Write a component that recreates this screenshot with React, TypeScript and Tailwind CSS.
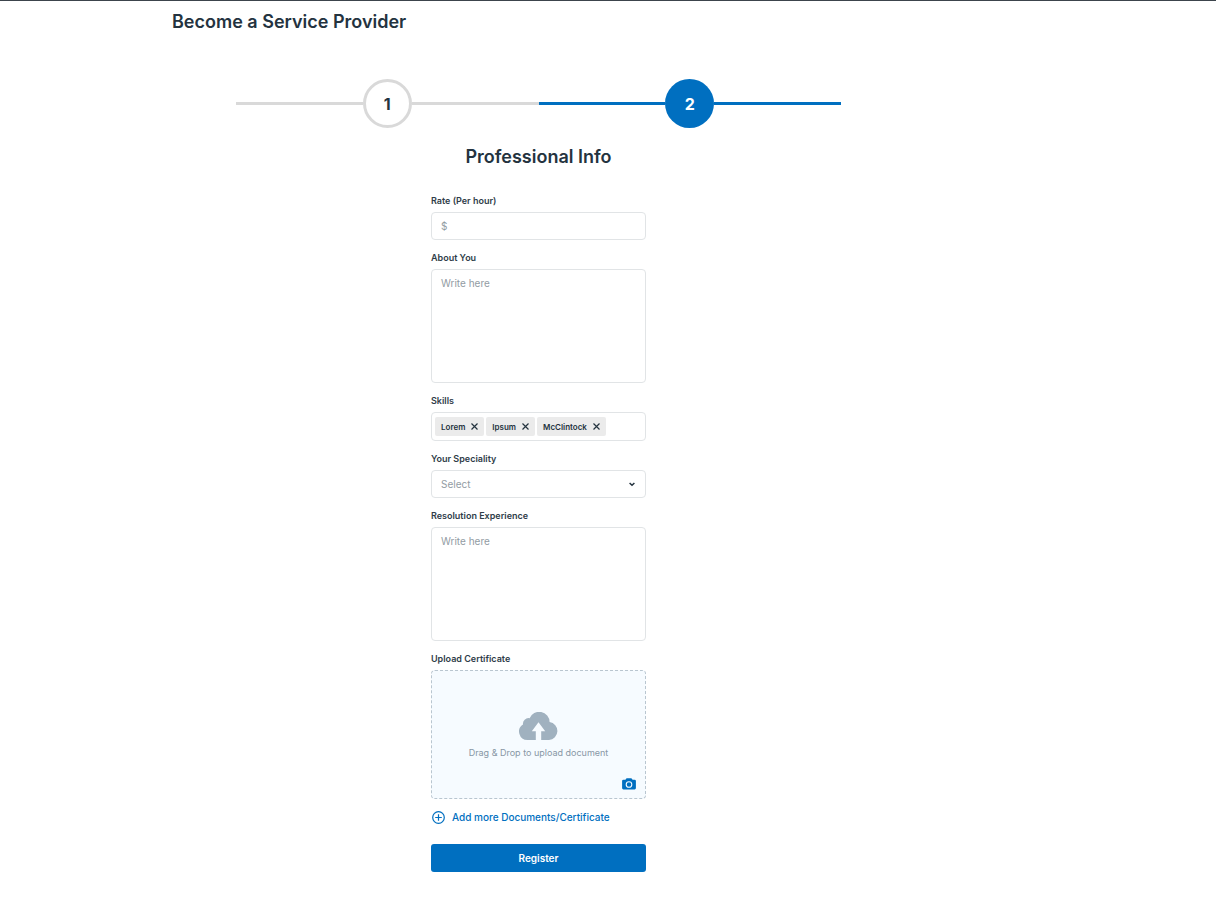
import { useState } from "react";
import type { ReactNode } from "react";

const boxClass =
  "block w-full rounded-[4px] border border-[#e1e4e6] bg-white text-[#24333f] outline-none focus:border-[#006fc0] placeholder:text-[#929ca3] placeholder:opacity-100";

function Field({ id, label, children }: { id: string; label: string; children: ReactNode }) {
  return (
    <div className="flex flex-col gap-1">
      <label htmlFor={id} className="text-[9px] leading-[14px] font-semibold text-[#2f3d49]">
        {label}
      </label>
      {children}
    </div>
  );
}

function Step({ number, active = false }: { number: number; active?: boolean }) {
  const line = active ? "h-[3px] flex-1 bg-[#006fc0]" : "h-[3px] flex-1 bg-[#d9d9d9]";
  const circle = active
    ? "flex size-[49px] items-center justify-center rounded-full bg-[#006fc0] text-base font-bold text-white"
    : "flex size-[49px] items-center justify-center rounded-full border-3 border-[#d9d9d9] bg-white text-base font-bold text-[#24333f]";
  return (
    <li className="flex flex-1 items-center" aria-current={active ? "step" : undefined}>
      <span className={line} />
      <span className={circle}>{number}</span>
      <span className={line} />
    </li>
  );
}

function CloudUpload() {
  return (
    <svg width="39" height="28" viewBox="0 0 39 28" aria-hidden="true">
      <path
        fill="#a0b1bf"
        d="M8.5 28A8.4 8.4 0 0 1 4 12.5A5.6 5.6 0 0 1 10.6 6.2A10.4 10.4 0 0 1 30.6 10.1A9 9 0 0 1 30 28Z"
      />
      <path fill="#f6fbff" d="M19.5 10.2L26.2 19.3H22.2V28H16.8V19.3H12.8Z" />
    </svg>
  );
}

function Camera() {
  return (
    <svg width="14" height="12" viewBox="0 0 14 12" aria-hidden="true">
      <path
        fill="#006fc0"
        d="M4.6 .3H9.4L10.6 1.7H12.6A1.3 1.3 0 0 1 13.9 3V10.1A1.3 1.3 0 0 1 12.6 11.4H1.4A1.3 1.3 0 0 1 .1 10.1V3A1.3 1.3 0 0 1 1.4 1.7H3.4Z"
      />
      <circle cx="7" cy="6.5" r="2.8" fill="none" stroke="#f6fbff" strokeWidth="1.1" />
    </svg>
  );
}

export default function App() {
  const [skills, setSkills] = useState(["Lorem", "Ipsum", "McClintock"]);

  return (
    <div className="min-h-screen border-t border-[#3c444c] bg-white font-['Inter','Liberation_Sans',sans-serif] text-[#24333f]">
      <main className="w-full max-w-[905px] pt-[9px] pb-9 pl-[172px]">
        <h1 className="text-[18px] leading-6 font-semibold">Become a Service Provider</h1>

        <ol className="mx-16 mt-[45px] flex">
          <Step number={1} />
          <Step number={2} active />
        </ol>

        <h2 className="mt-[17px] text-center text-[18px] leading-6 font-semibold">Professional Info</h2>

        <form
          className="mx-auto mt-[25px] flex max-w-[215px] flex-col gap-[11px]"
          onSubmit={(event) => event.preventDefault()}
        >
          <Field id="rate" label="Rate (Per hour)">
            <input id="rate" placeholder="$" className={`${boxClass} h-7 px-[9px] text-[10px]`} />
          </Field>

          <Field id="about" label="About You">
            <textarea
              id="about"
              placeholder="Write here"
              className={`${boxClass} h-[114px] resize-none px-[9px] py-[6px] text-[10px] leading-[14px]`}
            />
          </Field>

          <Field id="skills" label="Skills">
            <div className={`${boxClass} flex h-[29px] items-center gap-[2px] px-[3px]`}>
              {skills.map((skill) => (
                <span
                  key={skill}
                  className="flex h-[19px] shrink-0 items-center gap-[6px] rounded-[2px] bg-[#ebebeb] px-[6px] text-[8px] font-semibold"
                >
                  {skill}
                  <button
                    type="button"
                    aria-label={`Remove ${skill}`}
                    onClick={() => setSkills(skills.filter((item) => item !== skill))}
                  >
                    <svg width="7" height="7" viewBox="0 0 7 7" stroke="#24333f" strokeWidth="1.2">
                      <path d="M.5 .5L6.5 6.5M6.5 .5L.5 6.5" />
                    </svg>
                  </button>
                </span>
              ))}
              <input id="skills" className="min-w-0 flex-1 text-[9px] outline-none" />
            </div>
          </Field>

          <Field id="speciality" label="Your Speciality">
            <div className="relative">
              <select
                id="speciality"
                defaultValue=""
                className="block h-7 w-full appearance-none rounded-[4px] border border-[#e1e4e6] bg-white px-[9px] text-[10px] text-[#929ca3] outline-none focus:border-[#006fc0]"
              >
                <option value="">Select</option>
              </select>
              <svg
                className="pointer-events-none absolute top-3 right-[11px]"
                width="6"
                height="5"
                viewBox="0 0 6 5"
                fill="none"
                stroke="#24333f"
                strokeWidth="1.5"
                aria-hidden="true"
              >
                <path d="M.6 1L3 3.3L5.4 1" />
              </svg>
            </div>
          </Field>

          <Field id="experience" label="Resolution Experience">
            <textarea
              id="experience"
              placeholder="Write here"
              className={`${boxClass} h-[114px] resize-none px-[9px] py-[6px] text-[10px] leading-[14px]`}
            />
          </Field>

          <Field id="certificate" label="Upload Certificate">
            <div className="relative">
              <label
                htmlFor="certificate"
                className="flex h-[129px] cursor-pointer flex-col items-center gap-[6px] rounded-[4px] border border-dashed border-[#b9c6d0] bg-[#f6fbff] pt-[41px] text-[9px] leading-[14px] text-[#8897a5]"
              >
                <CloudUpload />
                Drag &amp; Drop to upload document
              </label>
              <input id="certificate" type="file" className="sr-only" />
              <button type="button" aria-label="Take a photo" className="absolute right-[10px] bottom-[9px]">
                <Camera />
              </button>
            </div>
          </Field>

          <button
            type="button"
            className="flex items-center gap-[7px] self-start pl-px text-[10px] leading-[14px] font-medium text-[#006fc0]"
          >
            <svg
              width="13"
              height="13"
              viewBox="0 0 13 13"
              fill="none"
              stroke="currentColor"
              strokeWidth="1.2"
              aria-hidden="true"
            >
              <circle cx="6.5" cy="6.5" r="5.8" />
              <path d="M6.5 3.2V9.8M3.2 6.5H9.8" />
            </svg>
            Add more Documents/Certificate
          </button>

          <button
            type="submit"
            className="mt-[9px] h-7 rounded-[3px] bg-[#006fc0] text-[10px] font-semibold text-white"
          >
            Register
          </button>
        </form>
      </main>
    </div>
  );
}
